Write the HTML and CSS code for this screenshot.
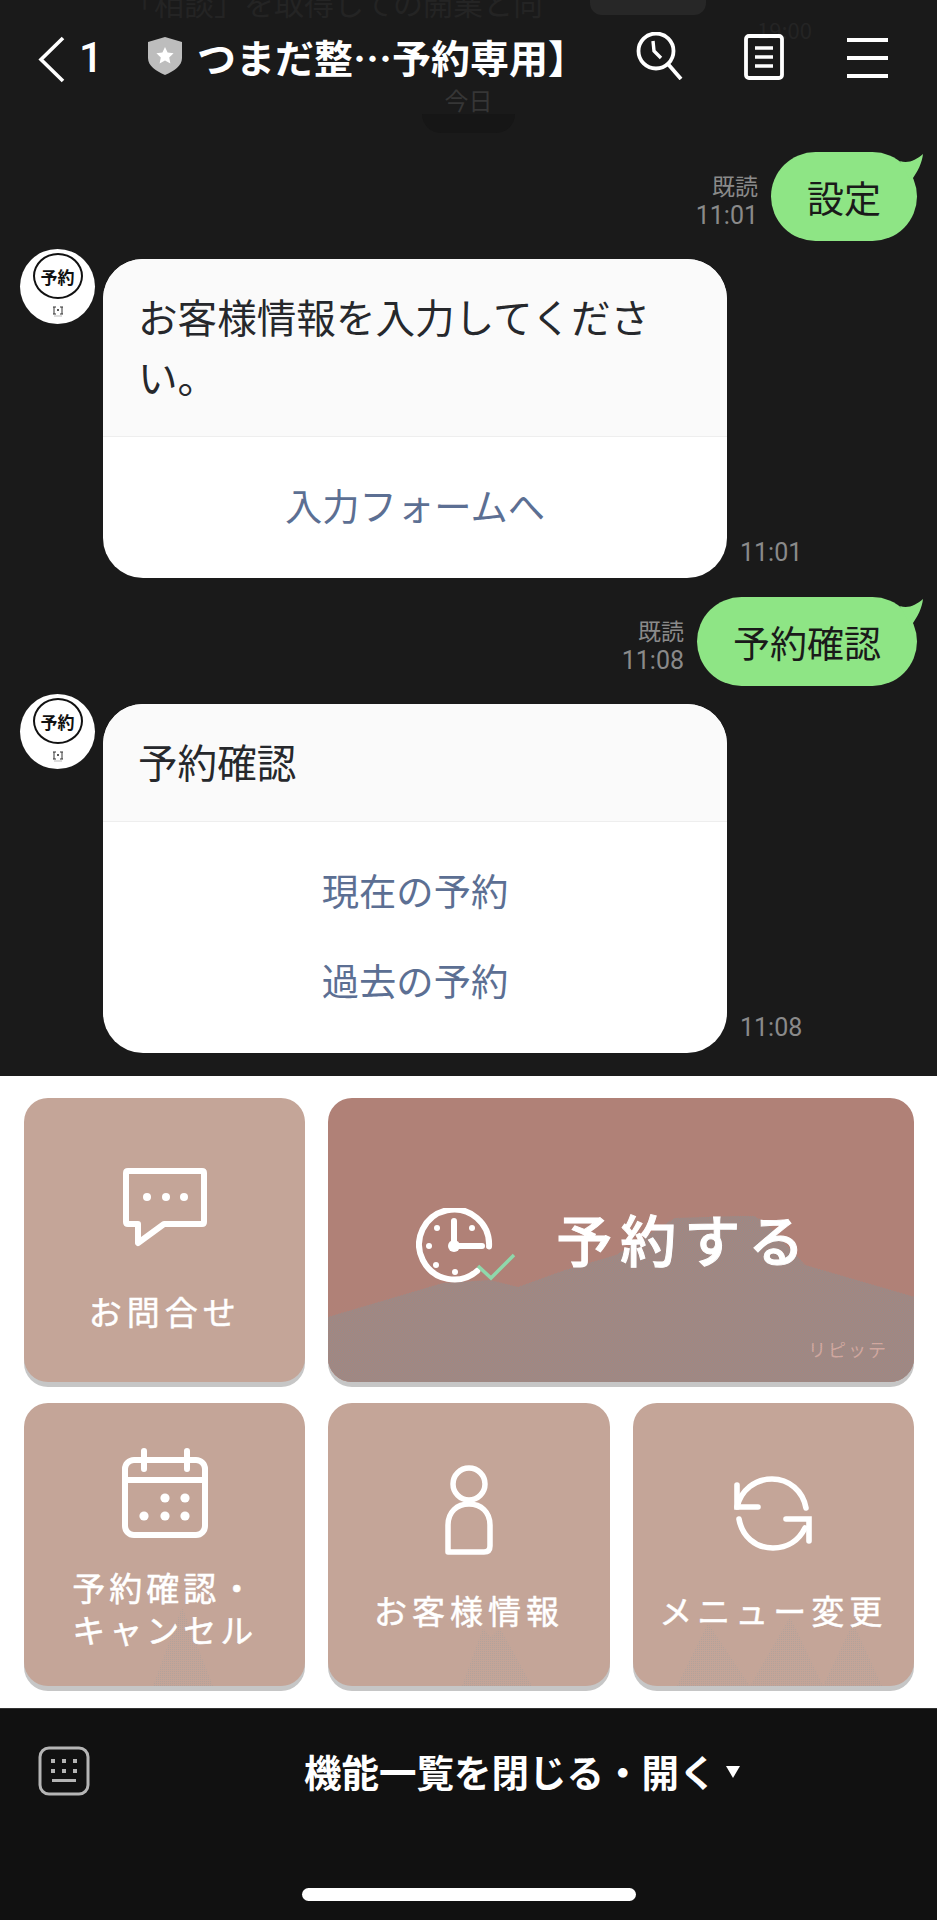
FILE: index.html
```html
<!DOCTYPE html>
<html lang="ja">
<head>
  <meta charset="UTF-8">
  <meta name="viewport" content="width=device-width, initial-scale=1.0">
  <title>つまだ整…予約専用】</title>
  <link rel="stylesheet" href="styles.css">
</head>
<body>

<div class="phone">

  <!-- トーク画面 -->
  <div class="chat">
    <div class="ghost-text">「相談」を取得しての開業と向</div>
    <div class="ghost-pill"></div>
    <div class="ghost-time">19:00</div>

    <div class="today">
      <span class="today-label">今日</span>
      <span class="today-shadow"></span>
    </div>

    <div class="header">
      <svg class="back" width="28" height="47" viewBox="0 0 28 47"><path d="M25 2 L3 23.5 L25 45" fill="none" stroke="#fff" stroke-width="3.6"/></svg>
      <span class="unread">1</span>
      <svg class="shield" width="34" height="38" viewBox="0 0 34 38">
        <path d="M17 0 L34 5 V21 C34 29 26 34 17 38 C8 34 0 29 0 21 V5 Z" fill="#bdbdbd"/>
        <path d="M17 10 L19.6 15.6 L25.6 16.3 L21.2 20.5 L22.4 26.5 L17 23.5 L11.6 26.5 L12.8 20.5 L8.4 16.3 L14.4 15.6 Z" fill="#fff"/>
      </svg>
      <span class="title">つまだ整…予約専用】</span>
      <svg class="h-search" width="48" height="48" viewBox="0 0 48 48">
        <circle cx="20" cy="19" r="17.5" fill="none" stroke="#fff" stroke-width="3.8"/>
        <path d="M32 32 L45 47" stroke="#fff" stroke-width="3.8" fill="none"/>
        <path d="M17 9 L18 19 L25 26" stroke="#fff" stroke-width="3.4" fill="none"/>
      </svg>
      <svg class="h-doc" width="40" height="46" viewBox="0 0 40 46">
        <rect x="2" y="2" width="36" height="42" rx="3" fill="none" stroke="#fff" stroke-width="3.8"/>
        <path d="M11 14 H29 M11 23 H29 M11 32 H29" stroke="#fff" stroke-width="3.4"/>
      </svg>
      <svg class="h-menu" width="41" height="40" viewBox="0 0 41 40">
        <path d="M0 2 H41 M0 20 H41 M0 38 H41" stroke="#fff" stroke-width="3.8"/>
      </svg>
    </div>

    <div class="row sent">
      <div class="meta"><span class="read">既読</span><span class="time">11:01</span></div>
      <div class="bubble">設定
        <svg class="tail" width="24" height="28" viewBox="0 0 24 28"><path d="M0 7 C8 10 16 6 23 0 C22 9 18 17 11 27 Z" fill="#8ee585"/></svg>
      </div>
    </div>

    <div class="row recv">
      <div class="avatar">
        <div class="avatar-ring">予約</div>
        <svg class="avatar-logo" width="10" height="11" viewBox="0 0 10 11"><path d="M1 1 V8 M9 1 V8 M0 1 H3 M7 1 H10 M0 8 H3 M7 8 H10" stroke="#333" fill="none"/><circle cx="5" cy="4" r="1" fill="#222"/><path d="M1 10 H9" stroke="#bbb"/></svg>
      </div>
      <div class="card">
        <div class="card-head">お客様情報を入力してください。</div>
        <div class="card-links">
          <a class="card-link">入力フォームへ</a>
        </div>
      </div>
      <span class="time card-time">11:01</span>
    </div>

    <div class="row sent">
      <div class="meta"><span class="read">既読</span><span class="time">11:08</span></div>
      <div class="bubble">予約確認
        <svg class="tail" width="24" height="28" viewBox="0 0 24 28"><path d="M0 7 C8 10 16 6 23 0 C22 9 18 17 11 27 Z" fill="#8ee585"/></svg>
      </div>
    </div>

    <div class="row recv">
      <div class="avatar">
        <div class="avatar-ring">予約</div>
        <svg class="avatar-logo" width="10" height="11" viewBox="0 0 10 11"><path d="M1 1 V8 M9 1 V8 M0 1 H3 M7 1 H10 M0 8 H3 M7 8 H10" stroke="#333" fill="none"/><circle cx="5" cy="4" r="1" fill="#222"/><path d="M1 10 H9" stroke="#bbb"/></svg>
      </div>
      <div class="card">
        <div class="card-head">予約確認</div>
        <div class="card-links">
          <a class="card-link">現在の予約</a>
          <a class="card-link">過去の予約</a>
        </div>
      </div>
      <span class="time card-time">11:08</span>
    </div>
  </div>

  <!-- リッチメニュー -->
  <div class="menu">
    <svg class="pattern-defs" width="0" height="0">
      <defs>
        <pattern id="ditherDark" width="2" height="2" patternUnits="userSpaceOnUse">
          <rect width="2" height="2" fill="#ad8279"/>
          <rect width="1" height="1" fill="#918e8e"/>
          <rect x="1" y="1" width="1" height="1" fill="#918e8e"/>
        </pattern>
        <pattern id="ditherLight" width="2" height="2" patternUnits="userSpaceOnUse">
          <rect width="2" height="2" fill="#c4a598"/>
          <rect width="1" height="1" fill="#b3a29b"/>
        </pattern>
      </defs>
    </svg>

    <div class="tile tile-contact">
      <svg width="84" height="79" viewBox="0 0 84 79">
        <path d="M5 3 H79 Q81 3 81 5 V54 Q81 56 79 56 H41 L15 75 V56 H5 Q3 56 3 54 V5 Q3 3 5 3 Z" fill="none" stroke="#fff" stroke-width="6" stroke-linejoin="round"/>
        <circle cx="24" cy="29" r="4" fill="#fff"/><circle cx="43" cy="29" r="4" fill="#fff"/><circle cx="61" cy="29" r="4" fill="#fff"/>
      </svg>
      <span class="tile-label">お問合せ</span>
    </div>

    <div class="tile tile-wide">
      <svg class="peaks" width="587" height="284" viewBox="0 0 587 284">
        <path d="M0 219 L115 185 L162 182 L190 189 L237 172 L288 157 L347 120 L410 118 L426 118 L438 125 L477 167 L587 199 V284 H0 Z" fill="url(#ditherDark)"/>
      </svg>
      <svg class="clock" width="100" height="76" viewBox="0 0 100 76">
        <path d="M63 61 A35 35 0 1 1 73 36" fill="none" stroke="#fff" stroke-width="6" stroke-linecap="round" transform="rotate(4 38 38)"/>
        <path d="M38 13 V38 H66" fill="none" stroke="#fff" stroke-width="6" stroke-linecap="round"/>
        <circle cx="38" cy="38" r="6" fill="#fff"/>
        <circle cx="21" cy="20" r="3" fill="#fff"/><circle cx="56" cy="20" r="3" fill="#fff"/><circle cx="13" cy="38" r="3" fill="#fff"/><circle cx="20" cy="57" r="3" fill="#fff"/><circle cx="39" cy="64" r="3" fill="#fff"/>
        <path d="M62 58 L75 70 L98 47" fill="none" stroke="#8fd8ab" stroke-width="3.5"/>
      </svg>
      <span class="wide-label">予約する</span>
      <span class="wide-note">リピッテ</span>
    </div>

    <div class="tile tile-reserve">
      <svg class="peaks" width="281" height="283" viewBox="0 0 281 283">
        <path d="M129 283 L158 204 L189 283 Z" fill="url(#ditherLight)"/>
      </svg>
      <svg width="86" height="90" viewBox="0 0 86 90">
        <rect x="3" y="12" width="80" height="75" rx="9" fill="none" stroke="#fff" stroke-width="6"/>
        <path d="M3 32 H83" stroke="#fff" stroke-width="6"/>
        <path d="M22 3 V21 M65 3 V21" stroke="#fff" stroke-width="6" stroke-linecap="round"/>
        <circle cx="43" cy="50" r="4.6" fill="#fff"/><circle cx="63" cy="50" r="4.6" fill="#fff"/><circle cx="22" cy="68" r="4.6" fill="#fff"/><circle cx="43" cy="68" r="4.6" fill="#fff"/><circle cx="63" cy="68" r="4.6" fill="#fff"/>
      </svg>
      <span class="tile-label tile-label-two">予約確認・<br>キャンセル</span>
    </div>

    <div class="tile tile-client">
      <svg class="peaks" width="281" height="283" viewBox="0 0 281 283">
        <path d="M134 283 L155 225 L163 234 L172 225 L204 283 Z" fill="url(#ditherLight)"/>
      </svg>
      <svg width="48" height="90" viewBox="0 0 48 90">
        <circle cx="24" cy="19" r="16" fill="none" stroke="#fff" stroke-width="5.5"/>
        <path d="M3 87 V60 C3 47 12 39 24 39 C36 39 45 47 45 60 V81 Q45 87 39 87 Z" fill="none" stroke="#fff" stroke-width="5.5" stroke-linejoin="round"/>
      </svg>
      <span class="tile-label">お客様情報</span>
    </div>

    <div class="tile tile-change">
      <svg class="peaks" width="281" height="283" viewBox="0 0 281 283">
        <path d="M44 283 L75 220 L117 283 Z M117 283 L157 214 L190 283 Z M190 283 L220 220 L249 283 Z" fill="url(#ditherLight)"/>
      </svg>
      <svg width="80" height="76" viewBox="0 0 80 76">
        <path d="M4 31 C8 14 22 3 39 3 C56 3 70 15 73 32" fill="none" stroke="#fff" stroke-width="5.6" stroke-linecap="round"/>
        <path d="M6 43 C9 60 22 72 40 72 C55 72 66 64 72 52" fill="none" stroke="#fff" stroke-width="5.6" stroke-linecap="round"/>
        <path d="M4 9 V31 H25" fill="none" stroke="#fff" stroke-width="5.6" stroke-linecap="round"/>
        <path d="M76 65 V43 H53" fill="none" stroke="#fff" stroke-width="5.6" stroke-linecap="round"/>
      </svg>
      <span class="tile-label">メニュー変更</span>
    </div>
  </div>

  <!-- 下部バー -->
  <div class="bottom">
    <div class="bottom-row">
      <svg width="52" height="50" viewBox="0 0 52 50">
        <rect x="2" y="2" width="48" height="46" rx="9" fill="none" stroke="#b5b5b5" stroke-width="3"/>
        <g fill="#b5b5b5">
          <rect x="13" y="13" width="4" height="4"/><rect x="24" y="13" width="4" height="4"/><rect x="35" y="13" width="4" height="4"/>
          <rect x="13" y="23" width="4" height="4"/><rect x="24" y="23" width="4" height="4"/><rect x="35" y="23" width="4" height="4"/>
          <rect x="14" y="33" width="24" height="3"/>
        </g>
      </svg>
      <span class="bottom-label">機能一覧を閉じる・開く</span>
      <span class="bottom-arrow"></span>
    </div>
    <div class="home-bar"></div>
  </div>

</div>

</body>
</html>
```

FILE: styles.css
```css
* {
  box-sizing: border-box;
}

body {
  margin: 0;
  background-color: #1a1a1a;
  font-family: "Noto Sans CJK JP", "Liberation Sans", sans-serif;
  color: #fff;
}

.phone {
  width: 937px;
  height: 1920px;
  display: flex;
  flex-direction: column;
  overflow: hidden;
}

/* トーク画面 */
.chat {
  position: relative;
  height: 1076px;
  padding-top: 152px;
  background-color: #1a1a1a;
  overflow: hidden;
}

.ghost-text {
  position: absolute;
  top: -20px;
  left: 124px;
  font-size: 30px;
  color: #242424;
  white-space: nowrap;
}

.ghost-pill {
  position: absolute;
  top: 0;
  left: 590px;
  width: 116px;
  height: 15px;
  background-color: #272727;
  border-radius: 0 0 12px 12px;
}

.ghost-time {
  position: absolute;
  top: 13px;
  left: 757px;
  font-size: 22px;
  color: #242424;
}

.today {
  position: absolute;
  top: 86px;
  left: 422px;
  width: 93px;
  text-align: center;
}

.today-label {
  display: block;
  font-size: 24px;
  line-height: 28px;
  color: #363636;
}

.today-shadow {
  display: block;
  height: 19px;
  background-color: #161616;
  border-radius: 0 0 40px 40px;
}

.header {
  position: absolute;
  top: 32px;
  left: 38px;
  right: 49px;
  display: flex;
  align-items: flex-start;
}

.back {
  margin-top: 4px;
}

.unread {
  margin-left: 13px;
  margin-top: 2px;
  font-size: 42px;
  line-height: 48px;
  font-weight: 500;
  font-family: "Roboto", "Liberation Sans", sans-serif;
}

.shield {
  margin-left: 45px;
  margin-top: 5px;
}

.title {
  margin-left: 15px;
  font-size: 39px;
  line-height: 48px;
  font-weight: 700;
  white-space: nowrap;
}

.h-search {
  margin-left: auto;
}

.h-doc {
  margin-left: 60px;
  margin-top: 2px;
}

.h-menu {
  margin-left: 63px;
  margin-top: 6px;
}

.row {
  display: flex;
}

.sent {
  justify-content: flex-end;
  align-items: center;
  padding-right: 20px;
  margin-bottom: 8px;
}

.recv {
  align-items: flex-start;
  padding-left: 20px;
  margin-bottom: 19px;
}

.meta {
  display: flex;
  flex-direction: column;
  align-items: flex-end;
  margin-right: 13px;
  margin-top: 8px;
}

.read {
  font-size: 23px;
  line-height: 30px;
  color: #8a8a8a;
}

.time {
  font-size: 25px;
  line-height: 32px;
  color: #8a8a8a;
  font-family: "Roboto", "Liberation Sans", sans-serif;
}

.bubble {
  position: relative;
  height: 89px;
  padding: 0 36px;
  display: flex;
  align-items: center;
  font-size: 37px;
  color: #1a1a1a;
  background-color: #8ee585;
  border-radius: 45px;
}

.tail {
  position: absolute;
  top: 2px;
  right: -7px;
}

.avatar {
  width: 75px;
  height: 75px;
  flex-shrink: 0;
  background-color: #fff;
  border-radius: 50%;
  display: flex;
  flex-direction: column;
  align-items: center;
  padding-top: 4px;
}

.avatar-ring {
  width: 50px;
  height: 46px;
  border: 2px solid #111;
  border-radius: 50%;
  color: #111;
  font-size: 17px;
  font-weight: 700;
  line-height: 44px;
  text-align: center;
  white-space: nowrap;
}

.avatar-logo {
  margin-top: 7px;
}

.card {
  width: 624px;
  margin-top: 10px;
  margin-left: 8px;
  background-color: #fff;
  border-radius: 40px;
  overflow: hidden;
  color: #222;
}

.card-head {
  padding: 27px 35px 30px;
  font-size: 39.6px;
  line-height: 60px;
  color: #26282c;
  background-color: #fafafa;
  border-bottom: 1px solid #eee;
}

.card-links {
  padding: 23px 0 28px;
  display: flex;
  flex-direction: column;
}

.card-link {
  height: 90px;
  line-height: 90px;
  text-align: center;
  font-size: 37.3px;
  color: #5c6f93;
}

.card-time {
  align-self: flex-end;
  margin-left: 13px;
  margin-bottom: 9px;
}

/* リッチメニュー */
.menu {
  height: 632px;
  padding: 22px 23px 0 24px;
  background-color: #fff;
  display: grid;
  grid-template-columns: repeat(3, 1fr);
  grid-template-rows: 284px 283px;
  gap: 21px 23px;
}

.pattern-defs {
  position: absolute;
}

.tile {
  position: relative;
  background-color: #c4a598;
  border-radius: 24px;
  box-shadow: 0 5px 0 #c6c6c6;
  display: flex;
  flex-direction: column;
  align-items: center;
  overflow: hidden;
}

.tile > svg,
.tile > span {
  position: relative;
  flex-shrink: 0;
}

.tile > .peaks {
  position: absolute;
  left: 0;
  top: 0;
}

.tile-label {
  font-size: 33px;
  line-height: 46px;
  letter-spacing: 5px;
  text-align: center;
  white-space: nowrap;
  -webkit-text-stroke: 0.5px #fff;
}

.tile-contact {
  padding-top: 70px;
}

.tile-contact .tile-label {
  margin-top: 41px;
}

.tile-wide {
  grid-column: span 2;
  flex-direction: row;
  background-color: #b08177;
  padding: 110px 0 0 88px;
  align-items: flex-start;
}

.clock {
  margin-right: 40px;
}

.wide-label {
  margin-top: -12px;
  font-size: 56px;
  line-height: 84px;
  letter-spacing: 8px;
  font-weight: 500;
  white-space: nowrap;
  -webkit-text-stroke: 1px #fff;
}

.tile-wide > .wide-note {
  position: absolute;
  right: 26px;
  bottom: 20px;
  font-size: 18px;
  letter-spacing: 2px;
  color: #cfa79f;
}

.tile-reserve {
  padding-top: 45px;
}

.tile-reserve .tile-label {
  margin-top: 28px;
  line-height: 42px;
  letter-spacing: 4px;
}

.tile-client {
  padding-top: 62px;
}

.tile-client .tile-label {
  margin-top: 32px;
}

.tile-change {
  padding-top: 73px;
}

.tile-change .tile-label {
  margin-top: 35px;
}

/* 下部バー */
.bottom {
  flex: 1;
  background-color: #111;
  border-top: 1px solid #333;
  padding: 37px 0 0 38px;
}

.bottom-row {
  display: flex;
  align-items: flex-start;
}

.bottom-label {
  margin-left: 214px;
  font-size: 37.5px;
  line-height: 50px;
  font-weight: 700;
  white-space: nowrap;
}

.bottom-arrow {
  margin-left: 9px;
  margin-top: 20px;
  width: 0;
  height: 0;
  border-left: 7px solid transparent;
  border-right: 7px solid transparent;
  border-top: 12px solid #fff;
}

.home-bar {
  width: 334px;
  height: 13px;
  margin: 92px 0 0 264px;
  background-color: #fff;
  border-radius: 7px;
}
```
